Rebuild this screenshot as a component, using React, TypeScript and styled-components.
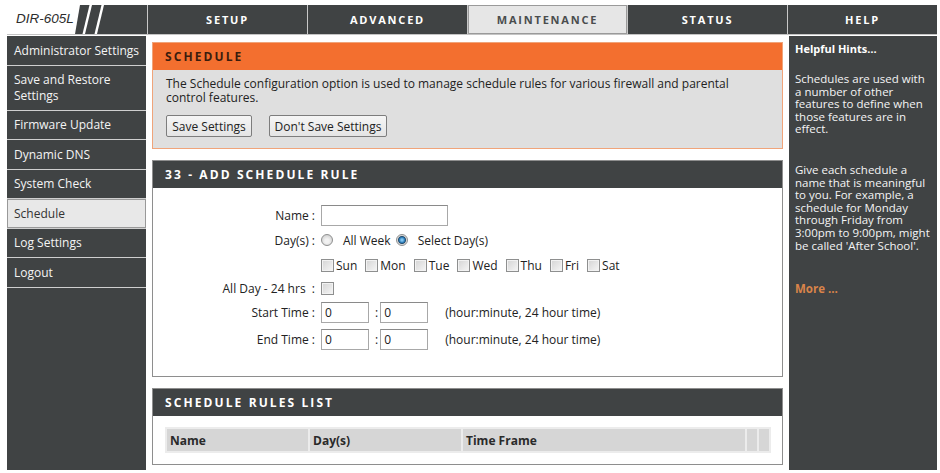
import React from "react";
import styled, { createGlobalStyle } from "styled-components";

const Global = createGlobalStyle`
  html, body { margin: 0; padding: 0; background: #ffffff; }
  body {
    font-family: "Open Sans", "Noto Sans", Arial, sans-serif;
    font-size: 12px;
    color: #222;
  }
  * { box-sizing: border-box; }
`;

const DARK = "#404344";

const Page = styled.div`
  width: 930px;
  margin: 5px 0 0 7px;
`;

const TopBar = styled.nav`
  display: grid;
  grid-template-columns: 140px repeat(4, 160px) 150px;
  height: 30px;
  background: ${DARK};
  border-bottom: 1px solid #c4c4c4;
`;

const LogoCell = styled.div`
  position: relative;
  height: 29px;
`;

const LogoText = styled.span`
  position: absolute;
  left: 9px;
  top: 6px;
  font-family: "Liberation Sans", Arial, sans-serif;
  font-style: italic;
  font-size: 13.5px;
  color: #2d2d2d;
`;

const Tab = styled.div<{ $active?: boolean }>`
  display: flex;
  align-items: center;
  justify-content: center;
  height: 29px;
  border-left: 1px solid #c8c8c8;
  font-weight: 700;
  font-size: 11px;
  letter-spacing: 1.8px;
  color: ${(p) => (p.$active ? "#4a4d4e" : "#ffffff")};
  background: ${(p) => (p.$active ? "#e6e6e6" : DARK)};
  box-shadow: ${(p) => (p.$active ? "inset 0 0 0 1px #9a9a9a" : "none")};
`;

const Body = styled.div`
  display: grid;
  grid-template-columns: 139px 631px 148px;
  column-gap: 6px;
  margin-top: 1px;
`;

const Sidebar = styled.aside`
  background: ${DARK};
  display: flex;
  flex-direction: column;
`;

const NavItem = styled.div<{ $active?: boolean; $tall?: boolean }>`
  display: flex;
  align-items: center;
  height: ${(p) => (p.$tall ? 45 : 29.5)}px;
  padding: 0 7px;
  font-size: 12px;
  line-height: 15.5px;
  white-space: nowrap;
  color: ${(p) => (p.$active ? "#333" : "#f4f4f4")};
  background: ${(p) => (p.$active ? "#e8e8e8" : DARK)};
  border-bottom: 1px solid #cfcfcf;
  box-shadow: ${(p) => (p.$active ? "inset 0 0 0 1px #999" : "none")};
`;

const Content = styled.main`
  padding: 6px 0 5px;
  display: flex;
  flex-direction: column;
  gap: 11px;
`;

const Box = styled.section<{ $tone: "orange" | "dark" }>`
  border: 1px solid ${(p) => (p.$tone === "orange" ? "#f0a47a" : "#8e8e8e")};
`;

const BoxHeader = styled.h2<{ $tone: "orange" | "dark" }>`
  margin: 0;
  height: 27px;
  display: flex;
  align-items: center;
  padding-left: 12px;
  font-size: 12px;
  font-weight: 700;
  letter-spacing: 2.1px;
  background: ${(p) => (p.$tone === "orange" ? "#f36f2f" : DARK)};
  color: ${(p) => (p.$tone === "orange" ? "#3b1d0e" : "#ffffff")};
`;

const IntroBody = styled.div`
  background: #dfdfdf;
  padding: 7px 12px 11px 13px;
`;

const IntroText = styled.p`
  margin: 0 0 10px;
  line-height: 14px;
  width: 590px;
`;

const ButtonRow = styled.div`
  display: flex;
  gap: 17px;
`;

const Button = styled.button<{ $w: number }>`
  width: ${(p) => p.$w}px;
  height: 22px;
  padding: 0;
  font-family: inherit;
  font-size: 12px;
  color: #222;
  background: linear-gradient(#f6f6f6, #e4e4e4);
  border: 1px solid #7d7d7d;
  border-radius: 2px;
`;

const FormBody = styled.div`
  background: #fff;
  height: 188px;
  padding-top: 15px;
`;

const FormRow = styled.div<{ $h: number }>`
  display: grid;
  grid-template-columns: 162px 1fr;
  column-gap: 6px;
  align-items: center;
  height: ${(p) => p.$h}px;
`;

const Label = styled.label`
  text-align: right;
  white-space: pre;
`;

const Field = styled.div`
  display: flex;
  align-items: center;
`;

const TextBox = styled.input<{ $w: number }>`
  width: ${(p) => p.$w}px;
  height: 21px;
  margin: 0;
  padding: 0 3px;
  font-family: inherit;
  font-size: 12px;
  color: #222;
  background: #fff;
  border: 1px solid #a8a8a8;
  border-top-color: #8a8a8a;
  outline: none;
`;

const Sep = styled.span`
  margin: 0 2px 0 6px;
`;

const Hint = styled.span`
  margin-left: 17px;
`;

const Radio = styled.input`
  appearance: none;
  width: 12px;
  height: 12px;
  margin: 0;
  border-radius: 50%;
  border: 1px solid #8e8f8f;
  background: radial-gradient(circle at 50% 60%, #f2f2f2 0 2px, #d2d2d2 6px);
  &:checked {
    background: radial-gradient(circle at 50% 50%, #7ec3f0 0 1px, #1d6ba6 3px, #2a4e6c 3.6px, #d6d6d6 4.4px, #f0f0f0 6px);
  }
`;

const Check = styled.input`
  appearance: none;
  width: 13px;
  height: 13px;
  margin: 0;
  border: 1px solid #8e8f8f;
  background: linear-gradient(135deg, #d4d4d4, #f6f6f6);
  box-shadow: inset 0 0 0 1px #f2f2f2;
`;

const OptText = styled.span<{ $gapL: number; $gapR: number }>`
  margin-left: ${(p) => p.$gapL}px;
  margin-right: ${(p) => p.$gapR}px;
`;

const ListBody = styled.div`
  background: #fff;
  padding: 11px 11px 11px 12px;
`;

const RuleTable = styled.div`
  display: grid;
  grid-template-columns: 141px 151px 282px 10px 10px;
  gap: 2px;
  padding: 2px;
  height: 26px;
  background: #ececec;
`;

const HeadCell = styled.div`
  display: flex;
  align-items: center;
  padding-left: 3px;
  background: #d6d6d6;
  font-weight: 700;
  color: #2a2a2a;
`;

const Help = styled.aside`
  background: ${DARK};
  color: #f4f4f4;
  padding: 6px 0 0 6px;
`;

const HelpTitle = styled.h3`
  margin: 0 0 17px;
  font-size: 11px;
  line-height: 14px;
  font-weight: 700;
  color: #fff;
`;

const HelpText = styled.div`
  margin: 0 0 28px;
  font-size: 11.5px;
  white-space: nowrap;
`;

const HelpLine = styled.div`
  height: 12.6px;
  line-height: 12.6px;
`;

const MoreLink = styled.span`
  font-weight: 700;
  font-size: 11.5px;
  color: #d9834a;
`;

const days = ["Sun", "Mon", "Tue", "Wed", "Thu", "Fri", "Sat"];
const navItems: { label: string; tall?: boolean; active?: boolean }[] = [
  { label: "Administrator Settings" },
  { label: "Save and Restore Settings", tall: true },
  { label: "Firmware Update" },
  { label: "Dynamic DNS" },
  { label: "System Check" },
  { label: "Schedule", active: true },
  { label: "Log Settings" },
  { label: "Logout" },
];

const hint1 = ["Schedules are used with", "a number of other", "features to define when", "those features are in", "effect."];
const hint2 = [
  "Give each schedule a",
  "name that is meaningful",
  "to you. For example, a",
  "schedule for Monday",
  "through Friday from",
  "3:00pm to 9:00pm, might",
  "be called 'After School'.",
];

export default function App() {
  return (
    <>
      <Global />
      <Page>
        <TopBar>
          <LogoCell>
            <svg width="140" height="29" viewBox="0 0 140 29" style={{ position: "absolute", left: 0, top: 0 }}>
              <polygon points="0,0 73,0 68,29 0,29" fill="#ffffff" />
              <polygon points="82.5,0 85,0 78,29 75.5,29" fill="#ffffff" />
              <polygon points="94.5,0 97,0 90,29 87.5,29" fill="#ffffff" />
            </svg>
            <LogoText>DIR-605L</LogoText>
          </LogoCell>
          <Tab>SETUP</Tab>
          <Tab>ADVANCED</Tab>
          <Tab $active>MAINTENANCE</Tab>
          <Tab>STATUS</Tab>
          <Tab>HELP</Tab>
        </TopBar>
        <Body>
          <Sidebar>
            {navItems.map((n) => (
              <NavItem key={n.label} $tall={n.tall} $active={n.active}>
                {n.tall ? (
                  <span>
                    Save and Restore
                    <br />
                    Settings
                  </span>
                ) : (
                  n.label
                )}
              </NavItem>
            ))}
          </Sidebar>
          <Content>
            <Box $tone="orange">
              <BoxHeader $tone="orange">SCHEDULE</BoxHeader>
              <IntroBody>
                <IntroText>
                  The Schedule configuration option is used to manage schedule rules for various firewall and parental
                  control features.
                </IntroText>
                <ButtonRow>
                  <Button $w={86}>Save Settings</Button>
                  <Button $w={118}>Don't Save Settings</Button>
                </ButtonRow>
              </IntroBody>
            </Box>
            <Box $tone="dark">
              <BoxHeader $tone="dark">33 - ADD SCHEDULE RULE</BoxHeader>
              <FormBody>
                <FormRow $h={25}>
                  <Label>Name :</Label>
                  <Field>
                    <TextBox $w={127} defaultValue="" />
                  </Field>
                </FormRow>
                <FormRow $h={24}>
                  <Label>Day(s) :</Label>
                  <Field>
                    <Radio type="radio" name="days" />
                    <OptText $gapL={10} $gapR={5}>All Week</OptText>
                    <Radio type="radio" name="days" defaultChecked />
                    <OptText $gapL={10} $gapR={0}>Select Day(s)</OptText>
                  </Field>
                </FormRow>
                <FormRow $h={26}>
                  <span />
                  <Field>
                    {days.map((d) => (
                      <React.Fragment key={d}>
                        <Check type="checkbox" />
                        <OptText $gapL={2} $gapR={8}>{d}</OptText>
                      </React.Fragment>
                    ))}
                  </Field>
                </FormRow>
                <FormRow $h={20}>
                  <Label>{"All Day - 24 hrs  :"}</Label>
                  <Field>
                    <Check type="checkbox" />
                  </Field>
                </FormRow>
                <FormRow $h={28}>
                  <Label>Start Time :</Label>
                  <Field>
                    <TextBox $w={48} defaultValue="0" />
                    <Sep>:</Sep>
                    <TextBox $w={48} defaultValue="0" />
                    <Hint>(hour:minute, 24 hour time)</Hint>
                  </Field>
                </FormRow>
                <FormRow $h={27}>
                  <Label>End Time :</Label>
                  <Field>
                    <TextBox $w={48} defaultValue="0" />
                    <Sep>:</Sep>
                    <TextBox $w={48} defaultValue="0" />
                    <Hint>(hour:minute, 24 hour time)</Hint>
                  </Field>
                </FormRow>
              </FormBody>
            </Box>
            <Box $tone="dark">
              <BoxHeader $tone="dark">SCHEDULE RULES LIST</BoxHeader>
              <ListBody>
                <RuleTable>
                  <HeadCell>Name</HeadCell>
                  <HeadCell>Day(s)</HeadCell>
                  <HeadCell>Time Frame</HeadCell>
                  <HeadCell />
                  <HeadCell />
                </RuleTable>
              </ListBody>
            </Box>
          </Content>
          <Help>
            <HelpTitle>Helpful Hints…</HelpTitle>
            <HelpText>
              {hint1.map((l) => (
                <HelpLine key={l}>{l}</HelpLine>
              ))}
            </HelpText>
            <HelpText>
              {hint2.map((l) => (
                <HelpLine key={l}>{l}</HelpLine>
              ))}
            </HelpText>
            <MoreLink>More …</MoreLink>
          </Help>
        </Body>
      </Page>
    </>
  );
}
